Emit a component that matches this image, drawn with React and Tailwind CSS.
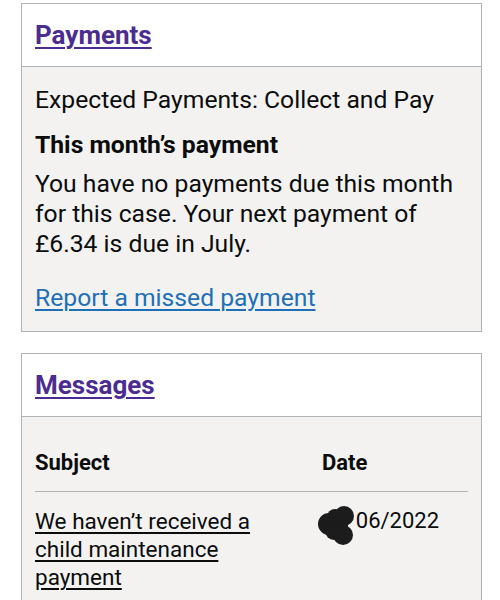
export default function App() {
  return (
    <div className="min-h-[600px] bg-white pt-[3px] font-['Roboto',sans-serif] text-[#0b0c0c]">
      <div className="ml-[21px] w-[461px] border border-[#b1b4b6]">
        <div className="border-b border-[#b1b4b6] bg-white px-[13px] py-[15px]">
          <a href="#" className="text-[26px] font-bold leading-[32px] text-[#4c2c92] underline decoration-2 underline-offset-[3px]">Payments</a>
        </div>
        <div className="bg-[#f3f2f1] px-[13px] pb-[18px] pt-[18px] text-[24.7px] leading-[30px]">
          <p>Expected Payments: Collect and Pay</p>
          <h3 className="mt-[15px] font-bold">This month’s payment</h3>
          <p className="mt-[9px]">You have no payments due this month for this case. Your next payment of £6.34 is due in July.</p>
          <a href="#" className="mt-[24px] block text-[#1d70b8] underline decoration-[1.5px] underline-offset-[3px]">Report a missed payment</a>
        </div>
      </div>

      <div className="ml-[21px] mt-[21px] w-[461px] border border-[#b1b4b6]">
        <div className="border-b border-[#b1b4b6] bg-white px-[13px] py-[15px]">
          <a href="#" className="text-[26px] font-bold leading-[32px] text-[#4c2c92] underline decoration-2 underline-offset-[3px]">Messages</a>
        </div>
        <div className="bg-[#f3f2f1] px-[13px] pb-[20px] pt-[31px]">
          <div className="flex border-b border-[#b1b4b6] pb-[13px] text-[22px] font-bold leading-[30px]">
            <div className="w-[287px]">Subject</div>
            <div className="flex-1">Date</div>
          </div>
          <div className="flex pt-[15px] leading-[28px]">
            <div className="w-[287px] pr-[45px] text-[22.5px]">
              <a href="#" className="underline decoration-[1.5px] underline-offset-[3px]">We haven’t received a child maintenance payment</a>
            </div>
            <div className="relative flex-1 text-[22px]">
              <span className="invisible">00/</span>06/2022
              <svg className="absolute left-[-5px] top-[-2px]" width="40" height="42" viewBox="0 0 40 42">
                <g fill="#1c1c1c">
                  <circle cx="12" cy="19" r="11" />
                  <circle cx="27" cy="11" r="10" />
                  <circle cx="26" cy="30" r="10" />
                  <circle cx="20" cy="20" r="11" />
                  <circle cx="17" cy="26" r="9" />
                  <circle cx="18" cy="12" r="8" />
                </g>
              </svg>
            </div>
          </div>
        </div>
      </div>
    </div>
  );
}
